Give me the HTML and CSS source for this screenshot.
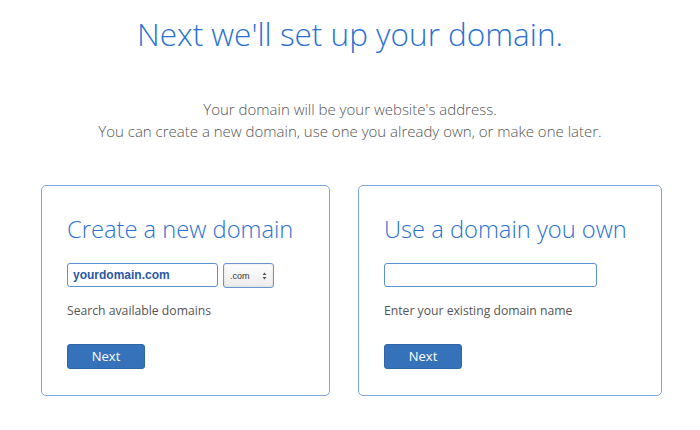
FILE: index.html
```html
<!DOCTYPE html>
<html>
<head>
<meta charset="utf-8">
<link rel="stylesheet" href="styles.css">
</head>
<body>
<div class="page">
  <h1 class="title">Next we'll set up your domain.</h1>
  <p class="lead">Your domain will be your website's address.<br>You can create a new domain, use one you already own, or make one later.</p>
  <div class="cards">
    <div class="card card-new">
      <h2 class="card-title">Create a new domain</h2>
      <div class="field-row">
        <div class="input input-new">yourdomain.com</div>
        <div class="select"><span>.com</span>
          <svg class="arrows" width="5" height="8" viewBox="0 0 5 8"><path d="M0.5 3 L2.5 0.5 L4.5 3 Z M0.5 5 L2.5 7.5 L4.5 5 Z" fill="#555"/></svg>
        </div>
      </div>
      <p class="hint">Search available domains</p>
      <div class="btn">Next</div>
    </div>
    <div class="card card-own">
      <h2 class="card-title">Use a domain you own</h2>
      <div class="field-row">
        <div class="input input-own"></div>
      </div>
      <p class="hint">Enter your existing domain name</p>
      <div class="btn">Next</div>
    </div>
  </div>
</div>
</body>
</html>
```
FILE: styles.css
```css
html, body { margin: 0; padding: 0; background: #fff; }
body { font-family: "Open Sans", "Liberation Sans", sans-serif; }
.page { width: 700px; height: 430px; overflow: hidden; }
.title {
  margin: 0; padding-top: 10px;
  text-align: center; font-weight: 300; font-size: 31.5px; line-height: 48px;
  color: #2a72d2;
}
.lead {
  margin: 40px 0 0; text-align: center; font-weight: 300;
  font-size: 15px; line-height: 22px; color: #555;
}
.cards { display: flex; gap: 28px; padding-left: 41px; margin-top: 43px; }
.card {
  box-sizing: border-box; height: 211px; border: 1px solid #7aa6e6;
  border-radius: 5px; padding: 25px 25px 0;
}
.card-new { width: 289px; }
.card-own { width: 304px; }
.card-title {
  margin: 0; font-weight: 300; font-size: 23.7px; line-height: 36px; color: #2a72d2;
}
.field-row { display: flex; gap: 5px; margin-top: 16px; height: 26px; align-items: flex-start; }
.input {
  box-sizing: border-box; height: 24px; border: 1px solid #5b8fd6; border-radius: 3px;
  font-family: "Liberation Sans", Arial, sans-serif; font-size: 12px; font-weight: 700;
  color: #2a58a4; line-height: 22px; padding-left: 5px;
}
.input-new { width: 151px; }
.input-own { width: 213px; }
.select {
  box-sizing: border-box; width: 51px; height: 25px; border: 1px solid #6a95d0;
  border-radius: 3px; background: linear-gradient(#fdfdfd, #ececec);
  box-shadow: inset 0 0 2px rgba(0,0,0,0.15);
  display: flex; align-items: center; justify-content: space-between; padding: 0 6px 0 6px;
  font-family: "Liberation Sans", Arial, sans-serif; font-size: 9px; color: #333;
}
.arrows { display: block; }
.hint {
  margin: 12px 0 0; font-weight: 400; font-size: 12.2px; line-height: 20px; color: #555;
}
.btn {
  margin-top: 23px; width: 78px; height: 25px; box-sizing: border-box;
  background: #3572b9; border: 1px solid #2f66a8; border-radius: 3px;
  color: #fff; text-align: center; font-size: 13px; line-height: 23px; font-weight: 400;
}
```
